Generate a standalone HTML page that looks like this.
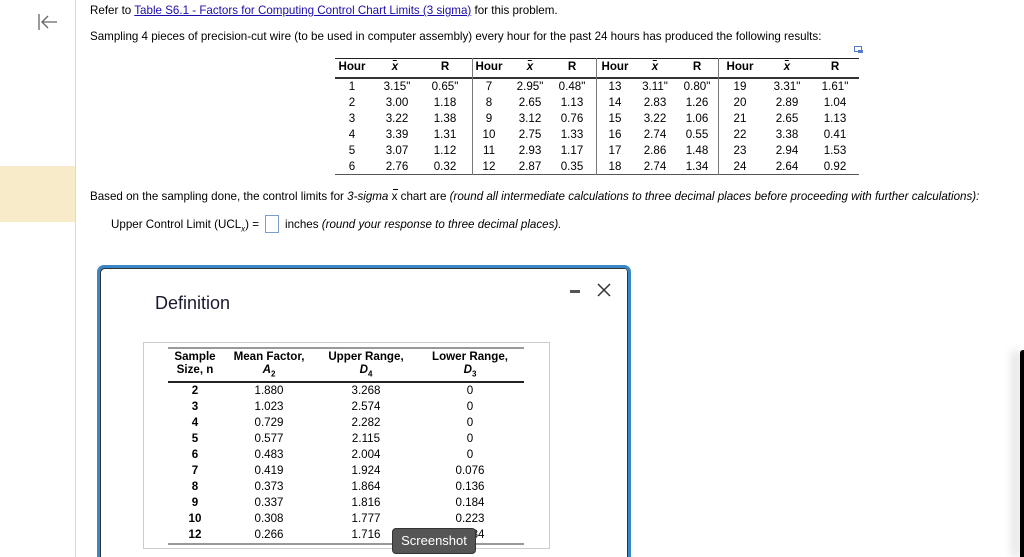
<!DOCTYPE html>
<html><head><meta charset="utf-8"><style>
*{margin:0;padding:0;box-sizing:border-box}
html,body{width:1024px;height:557px;overflow:hidden}
body{background:#fff;font-family:"Liberation Sans",Arial,sans-serif;color:#000;position:relative;font-size:11.6px}
.a{position:absolute;white-space:nowrap}
.c{position:absolute;text-align:center;white-space:nowrap;transform:translateX(-50%)}
a{color:#1a0dab;text-decoration:underline}
.xb{font-weight:bold;font-style:italic;position:relative;display:inline-block}
.xb:before{content:"";position:absolute;left:1px;right:1px;top:0;border-top:1px solid #000}
</style></head><body>
<div class="a" style="left:75px;top:0;width:1px;height:557px;background:#d6d9e0"></div>
<div class="a" style="left:0;top:166px;width:75px;height:56px;background:#f7ebc9"></div>
<svg class="a" style="left:37px;top:13px" width="22" height="18" viewBox="0 0 22 18"><path d="M2 1V17M20 9H5M11 3L5 9L11 15" stroke="#666" stroke-width="1.3" fill="none"/></svg>
<div class="a" style="left:90px;top:4px">Refer to <a>Table S6.1 - Factors for Computing Control Chart Limits (3 sigma)</a> for this problem.</div>
<div class="a" style="left:90px;top:30px">Sampling 4 pieces of precision-cut wire (to be used in computer assembly) every hour for the past 24 hours has produced the following results:</div>
<svg class="a" style="left:854px;top:46px" width="10" height="8"><rect x="0.5" y="0.5" width="7" height="5" fill="#fff" stroke="#5577cc"/><rect x="4" y="4" width="5" height="3" fill="#5577cc"/></svg>
<div class="a" style="left:335px;top:58px;width:524px;height:1px;border-top:1.5px solid #222"></div>
<div class="a" style="left:335px;top:77px;width:524px;border-top:2px solid #333"></div>
<div class="a" style="left:335px;top:174px;width:524px;border-top:1.5px solid #555"></div>
<div class="a" style="left:472px;top:58px;height:117px;border-left:1.5px solid #777"></div>
<div class="a" style="left:596px;top:58px;height:117px;border-left:1.5px solid #777"></div>
<div class="a" style="left:718px;top:58px;height:117px;border-left:1.5px solid #777"></div>
<div id="dt"></div>
<div class="a" style="left:90px;top:190px">Based on the sampling done, the control limits for <i>3-sigma</i> <span style="position:relative">x<span style="position:absolute;left:1px;top:-1px;width:5px;border-top:1px solid #000"></span></span> chart are <i>(round all intermediate calculations to three decimal places before proceeding with further calculations):</i></div>
<div class="a" style="left:111px;top:218px">Upper Control Limit (UCL<sub style="font-size:8px"><i>x</i></sub>) = </div>
<div class="a" style="left:265px;top:215px;width:14px;height:18px;border:1px solid #7a9cc8;background:#fff"></div>
<div class="a" style="left:285px;top:218px">inches <i>(round your response to three decimal places).</i></div>
<div class="a" style="left:1020px;top:350px;width:4px;height:207px;background:#000;box-shadow:-6px 0 10px rgba(0,0,0,.25);border-radius:3px 0 0 0"></div>
<div class="a" style="left:97px;top:265px;width:534px;height:292px;border:3px solid #3a87c8;border-bottom:0;border-radius:7px 7px 0 0;background:#fff;box-shadow:inset 1px 1px 0 0 #333,inset -1px 0 0 0 #333"></div>
<div class="a" style="left:155px;top:293px;font-size:18px;color:#1a1a2e">Definition</div>
<div class="a" style="left:570px;top:290px;width:10px;height:3px;background:#555"></div>
<svg class="a" style="left:597px;top:283px" width="14" height="14"><path d="M1 1L13 13M13 1L1 13" stroke="#333" stroke-width="1.5"/></svg>
<div class="a" style="left:143px;top:342px;width:407px;height:207px;border:1px solid #ccc"></div>
<div class="a" style="left:168px;top:347px;width:356px;border-top:2px solid #999"></div>
<div class="a" style="left:168px;top:381px;width:356px;border-top:2px solid #222"></div>
<div class="a" style="left:168px;top:543px;width:356px;border-top:2px solid #999"></div>
<div class="c" style="left:195px;top:350px;font-weight:bold;line-height:13px">Sample<br>Size, n</div>
<div class="c" style="left:269px;top:350px;font-weight:bold;line-height:13px">Mean Factor,<br><i>A</i><sub style="font-size:8px">2</sub></div>
<div class="c" style="left:366px;top:350px;font-weight:bold;line-height:13px">Upper Range,<br><i>D</i><sub style="font-size:8px">4</sub></div>
<div class="c" style="left:470px;top:350px;font-weight:bold;line-height:13px">Lower Range,<br><i>D</i><sub style="font-size:8px">3</sub></div>
<div id="ft"></div>
<div class="a" style="left:392px;top:528px;width:84px;height:26px;background:#555;border:1px solid #333;border-radius:4px;color:#fff;font-size:13px;text-align:center;line-height:24px">Screenshot</div>
<script>
var H=[[352,"Hour"],[395,"x"],[445,"R"],[489,"Hour"],[530,"x"],[572,"R"],[615,"Hour"],[655,"x"],[697,"R"],[740,"Hour"],[787,"x"],[835,"R"]];
var s="";
H.forEach(function(h){s+='<div class="c" style="left:'+h[0]+'px;top:60px;font-weight:bold">'+(h[1]=="x"?'<span class="xb">x</span>':h[1])+'</div>';});
var D=[["1","3.15\"","0.65\"","7","2.95\"","0.48\"","13","3.11\"","0.80\"","19","3.31\"","1.61\""],
["2","3.00","1.18","8","2.65","1.13","14","2.83","1.26","20","2.89","1.04"],
["3","3.22","1.38","9","3.12","0.76","15","3.22","1.06","21","2.65","1.13"],
["4","3.39","1.31","10","2.75","1.33","16","2.74","0.55","22","3.38","0.41"],
["5","3.07","1.12","11","2.93","1.17","17","2.86","1.48","23","2.94","1.53"],
["6","2.76","0.32","12","2.87","0.35","18","2.74","1.34","24","2.64","0.92"]];
var X=[352,397,445,489,530,572,615,655,697,740,787,835];
D.forEach(function(r,i){r.forEach(function(v,j){s+='<div class="c" style="left:'+X[j]+'px;top:'+(80+i*16)+'px">'+v+'</div>';});});
document.getElementById("dt").innerHTML=s;
var F=[["2","1.880","3.268","0"],["3","1.023","2.574","0"],["4","0.729","2.282","0"],["5","0.577","2.115","0"],["6","0.483","2.004","0"],["7","0.419","1.924","0.076"],["8","0.373","1.864","0.136"],["9","0.337","1.816","0.184"],["10","0.308","1.777","0.223"],["12","0.266","1.716","0.284"]];
var FX=[195,269,366,470];t="";
F.forEach(function(r,i){r.forEach(function(v,j){t+='<div class="c" style="left:'+FX[j]+'px;top:'+(384+i*16)+'px;'+(j==0?'font-weight:bold':'')+'">'+v+'</div>';});});
document.getElementById("ft").innerHTML=t;
</script>
</body></html>
